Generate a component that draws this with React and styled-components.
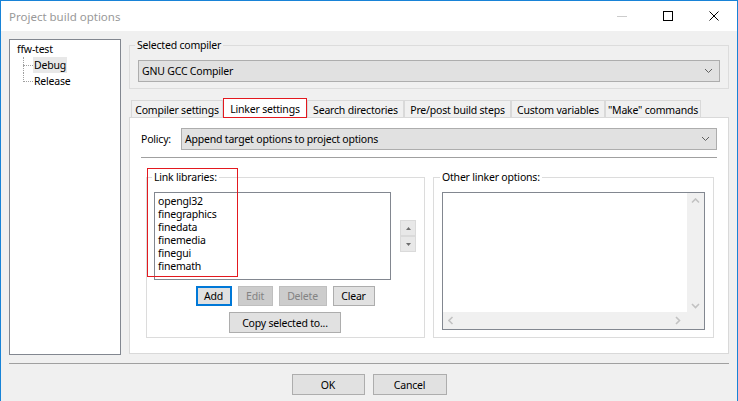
import React from "react";
import styled, { createGlobalStyle } from "styled-components";

const GlobalStyle = createGlobalStyle`
  html, body { margin: 0; padding: 0; background: #f0f0f0; }
  body {
    font-family: "Noto Sans", "Open Sans", sans-serif;
    font-size: 10.5px;
    letter-spacing: -0.2px;
    color: #000;
  }
  * { box-sizing: border-box; }
`;

const Window = styled.div`
  width: 738px;
  height: 401px;
  border: 1px solid #1883d7;
  border-bottom: none;
  background: #f0f0f0;
  display: flex;
  flex-direction: column;
  overflow: hidden;
`;

const TitleBar = styled.div`
  height: 30px;
  flex-shrink: 0;
  background: #fff;
  display: flex;
  align-items: center;
`;

const Title = styled.div`
  flex: 1;
  padding-left: 8px;
  font-size: 11.5px;
  letter-spacing: 0;
  color: #999;
`;

const CaptionButton = styled.div`
  width: 46px;
  height: 30px;
  display: flex;
  align-items: center;
  justify-content: center;
`;

const Body = styled.div`
  display: flex;
  gap: 8px;
  padding: 8px 8px 0 8px;
`;

const Tree = styled.div`
  width: 112px;
  height: 316px;
  flex-shrink: 0;
  background: #fff;
  border: 1px solid #828790;
  padding: 1px 0 0 6px;
`;

const TreeRow = styled.div`
  height: 16px;
  display: flex;
  align-items: center;
  white-space: nowrap;
  padding-left: ${(p) => (p.$child ? 7 : 0)}px;
`;

const Connector = styled.span`
  position: relative;
  width: 10px;
  height: 16px;
  flex-shrink: 0;
  &::before {
    content: "";
    position: absolute;
    left: 0;
    top: 0;
    height: ${(p) => (p.$last ? 9 : 16)}px;
    border-left: 1px dotted #a0a0a0;
  }
  &::after {
    content: "";
    position: absolute;
    left: 0;
    top: 8px;
    width: 10px;
    border-top: 1px dotted #a0a0a0;
  }
`;

const TreeLabel = styled.span`
  height: 16px;
  line-height: 16px;
  padding: 0 1px;
  background: ${(p) => (p.$selected ? "#e8e8e8" : "transparent")};
`;

const RightCol = styled.div`
  width: 600px;
  padding-top: 6px;
  display: flex;
  flex-direction: column;
`;

/* group box: border with its caption pulled up over the top line */
const Group = styled.div`
  border: 1px solid #dcdcdc;
  padding: ${(p) => p.$pad};
  display: flex;
  flex-direction: column;
  height: ${(p) => (p.$h ? `${p.$h}px` : "auto")};
`;

const Legend = styled.div`
  align-self: flex-start;
  margin: -7px 0 9px ${(p) => p.$shift}px;
  padding: 0 2px;
  line-height: 12px;
  height: 12px;
  white-space: nowrap;
  background: ${(p) => p.$bg};
`;

const Combo = styled.div`
  height: 22px;
  flex: ${(p) => (p.$grow ? "1 1 auto" : "none")};
  border: 1px solid #adadad;
  background: #e1e1e1;
  display: flex;
  align-items: center;
  padding: 0 6px 0 3px;
  white-space: nowrap;
`;

const ComboText = styled.span`
  flex: 1;
`;

const TabStrip = styled.div`
  margin-top: 9px;
  height: 20px;
  margin-bottom: -1px;
  display: flex;
  align-items: flex-end;
  padding-left: 2px;
  position: relative;
  z-index: 1;
`;

const Tab = styled.div`
  position: relative;
  width: ${(p) => p.$w}px;
  height: ${(p) => (p.$active ? 20 : 17)}px;
  margin-bottom: ${(p) => (p.$active ? 0 : 1)}px;
  background: ${(p) => (p.$active ? "#fff" : "#f0f0f0")};
  border: 1px solid #d9d9d9;
  border-bottom: none;
  display: flex;
  align-items: center;
  justify-content: center;
  white-space: nowrap;
  padding-top: ${(p) => (p.$active ? 0 : 1)}px;
  &::after {
    content: "";
    display: ${(p) => (p.$marked ? "block" : "none")};
    position: absolute;
    inset: -1px -1px 0 -1px;
    border: 1px solid #e3191f;
  }
`;

const Panel = styled.div`
  height: 237px;
  background: #fff;
  border: 1px solid #d9d9d9;
  padding: 10px 11px 0 11px;
  display: flex;
  flex-direction: column;
`;

const PolicyRow = styled.div`
  display: flex;
  align-items: center;
  height: 22px;
`;

const PolicyLabel = styled.span`
  width: 40px;
  flex-shrink: 0;
`;

const Separator = styled.div`
  height: 1px;
  flex-shrink: 0;
  background: #a0a0a0;
  margin: ${(p) => p.$margin};
`;

const GroupsRow = styled.div`
  margin-top: 19px;
  padding: 0 3px 0 5px;
  display: flex;
  gap: 8px;
`;

const GroupCell = styled.div`
  position: relative;
  width: ${(p) => p.$w}px;
`;

const Highlight = styled.div`
  position: absolute;
  left: 1px;
  top: -9px;
  width: 91px;
  height: 109px;
  border: 1px solid #e3191f;
  pointer-events: none;
`;

const ListRow = styled.div`
  display: flex;
  align-items: center;
  gap: 9px;
`;

const ListBox = styled.div`
  width: 237px;
  height: 88px;
  background: #fff;
  border: 1px solid #828790;
  padding: 2px 0 0 3px;
  line-height: 13px;
`;

const Spin = styled.div`
  width: 16px;
  display: flex;
  flex-direction: column;
`;

const SpinButton = styled.div`
  height: 16px;
  background: #e8e8e8;
  border: 1px solid #dadada;
  display: flex;
  align-items: center;
  justify-content: center;
`;

const ButtonRow = styled.div`
  display: flex;
  justify-content: center;
  gap: ${(p) => p.$gap || 6}px;
  margin-top: ${(p) => p.$top}px;
`;

const Button = styled.button`
  width: ${(p) => p.$w}px;
  height: ${(p) => p.$h || 20}px;
  padding: 0;
  font: inherit;
  letter-spacing: inherit;
  color: ${(p) => (p.disabled ? "#838383" : "#000")};
  background: ${(p) => (p.disabled ? "#cccccc" : "#e1e1e1")};
  border: ${(p) =>
    p.$default
      ? "2px solid #0078d7"
      : p.disabled
      ? "1px solid #bfbfbf"
      : "1px solid #adadad"};
  white-space: nowrap;
`;

const TextArea = styled.div`
  height: 138px;
  background: #fff;
  border: 1px solid #828790;
  display: grid;
  grid-template-columns: 1fr 17px;
  grid-template-rows: 1fr 17px;
`;

const VScroll = styled.div`
  background: #f0f0f0;
  display: flex;
  flex-direction: column;
  justify-content: space-between;
  align-items: center;
  padding: 5px 0 3px;
`;

const HScroll = styled.div`
  background: #f0f0f0;
  display: flex;
  justify-content: space-between;
  align-items: center;
  padding: 0 6px 0 5px;
`;

const Corner = styled.div`
  background: #f0f0f0;
`;

const Footer = styled.div`
  display: flex;
  flex-direction: column;
`;

const Chevron = ({ dir, color = "#606060", weight = 1.6 }) => {
  const pts = {
    down: "1,1 4.5,4.5 8,1",
    up: "1,4.5 4.5,1 8,4.5",
    left: "4.5,1 1,4.5 4.5,8",
    right: "1,1 4.5,4.5 1,8",
  }[dir];
  const vert = dir === "down" || dir === "up";
  return (
    <svg width={vert ? 9 : 6} height={vert ? 6 : 9} viewBox={vert ? "0 0 9 6" : "0 0 6 9"}>
      <polyline points={pts} fill="none" stroke={color} strokeWidth={weight} />
    </svg>
  );
};

const Triangle = ({ up }) => (
  <svg width="5" height="3" viewBox="0 0 5 3">
    <polygon points={up ? "0,3 5,3 2.5,0" : "0,0 5,0 2.5,3"} fill="#6d6d6d" />
  </svg>
);

const libraries = ["opengl32", "finegraphics", "finedata", "finemedia", "finegui", "finemath"];

const tabs = [
  { label: "Compiler settings", w: 92 },
  { label: "Linker settings", w: 84, active: true },
  { label: "Search directories", w: 97 },
  { label: "Pre/post build steps", w: 107 },
  { label: "Custom variables", w: 94 },
  { label: "\"Make\" commands", w: 96 },
];

export default function App() {
  return (
    <>
      <GlobalStyle />
      <Window>
        <TitleBar>
          <Title>Project build options</Title>
          <CaptionButton>
            <svg width="10" height="10" viewBox="0 0 10 10">
              <line x1="0" y1="5.5" x2="10" y2="5.5" stroke="#cccccc" strokeWidth="1" />
            </svg>
          </CaptionButton>
          <CaptionButton>
            <svg width="10" height="10" viewBox="0 0 10 10">
              <rect x="0.5" y="0.5" width="9" height="9" fill="none" stroke="#000" strokeWidth="1" />
            </svg>
          </CaptionButton>
          <CaptionButton>
            <svg width="10" height="10" viewBox="0 0 10 10">
              <path d="M0.5 0.5 L9.5 9.5 M9.5 0.5 L0.5 9.5" stroke="#000" strokeWidth="1" />
            </svg>
          </CaptionButton>
        </TitleBar>

        <Body>
          <Tree>
            <TreeRow>
              <TreeLabel>ffw-test</TreeLabel>
            </TreeRow>
            <TreeRow $child>
              <Connector />
              <TreeLabel $selected>Debug</TreeLabel>
            </TreeRow>
            <TreeRow $child>
              <Connector $last />
              <TreeLabel>Release</TreeLabel>
            </TreeRow>
          </Tree>

          <RightCol>
            <Group $pad="0 8px 6px 8px">
              <Legend $shift={-3} $bg="#f0f0f0">Selected compiler</Legend>
              <Combo>
                <ComboText>GNU GCC Compiler</ComboText>
                <Chevron dir="down" weight={1} />
              </Combo>
            </Group>

            <TabStrip>
              {tabs.map((t) => (
                <Tab key={t.label} $w={t.w} $active={t.active} $marked={t.active}>
                  {t.label}
                </Tab>
              ))}
            </TabStrip>

            <Panel>
              <PolicyRow>
                <PolicyLabel>Policy:</PolicyLabel>
                <Combo $grow>
                  <ComboText>Append target options to project options</ComboText>
                  <Chevron dir="down" weight={1} />
                </Combo>
              </PolicyRow>
              <Separator $margin="7px 0 0 0" />

              <GroupsRow>
                <GroupCell $w={279}>
                  <Group $pad="0 8px 0 7px" $h={161}>
                    <Legend $shift={-2} $bg="#fff">Link libraries:</Legend>
                    <ListRow>
                      <ListBox>
                        {libraries.map((l) => (
                          <div key={l}>{l}</div>
                        ))}
                      </ListBox>
                      <Spin>
                        <SpinButton>
                          <Triangle up />
                        </SpinButton>
                        <SpinButton>
                          <Triangle />
                        </SpinButton>
                      </Spin>
                    </ListRow>
                    <ButtonRow $top={6}>
                      <Button $w={36} $default>Add</Button>
                      <Button $w={35} disabled>Edit</Button>
                      <Button $w={48} disabled>Delete</Button>
                      <Button $w={42}>Clear</Button>
                    </ButtonRow>
                    <ButtonRow $top={6}>
                      <Button $w={112} $h={21}>Copy selected to...</Button>
                    </ButtonRow>
                  </Group>
                  <Highlight />
                </GroupCell>

                <GroupCell $w={281}>
                  <Group $pad="0 8px 0 8px" $h={161}>
                    <Legend $shift={-2} $bg="#fff">Other linker options:</Legend>
                    <TextArea>
                      <div />
                      <VScroll>
                        <Chevron dir="up" color="#c2c2c2" />
                        <Chevron dir="down" color="#c2c2c2" />
                      </VScroll>
                      <HScroll>
                        <Chevron dir="left" color="#c2c2c2" />
                        <Chevron dir="right" color="#c2c2c2" />
                      </HScroll>
                      <Corner />
                    </TextArea>
                  </Group>
                </GroupCell>
              </GroupsRow>
            </Panel>
          </RightCol>
        </Body>

        <Footer>
          <Separator $margin="8px 8px 0 8px" />
          <ButtonRow $top={10} $gap={8}>
            <Button $w={73} $h={21}>OK</Button>
            <Button $w={74} $h={21}>Cancel</Button>
          </ButtonRow>
        </Footer>
      </Window>
    </>
  );
}
